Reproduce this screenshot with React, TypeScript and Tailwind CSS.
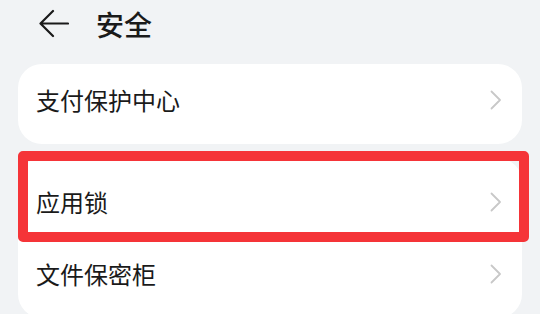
import React from 'react';

const Chevron: React.FC = () => (
  <svg width="12" height="20" viewBox="0 0 12 20" fill="none">
    <path d="M1.5 1.5 L10 10 L1.5 18.5" stroke="#c8c8c8" strokeWidth="1.8" strokeLinecap="round" strokeLinejoin="round" />
  </svg>
);

const Row: React.FC<{ label: string }> = ({ label }) => (
  <div className="h-[72px] flex items-center justify-between pl-[18px] pr-[20px]">
    <span className="text-[24px] leading-none text-[#1a1a1a]">{label}</span>
    <Chevron />
  </div>
);

const App: React.FC = () => {
  return (
    <div className="relative w-[540px] h-[314px] overflow-hidden bg-[#f1f3f5] font-['Noto_Sans_CJK_SC','Noto_Sans',sans-serif]">
      {/* Header */}
      <div className="h-[46px] flex items-center pl-[38px] pt-[1px]">
        <svg width="31" height="29" viewBox="0 0 31 29" fill="none">
          <path d="M30 14.5 H3 M15 2 L2.5 14.5 L15 27" stroke="#1a1a1a" strokeWidth="2.2" strokeLinecap="round" strokeLinejoin="round" />
        </svg>
        <span className="ml-[27px] text-[28px] leading-none font-medium text-[#1a1a1a]">安全</span>
      </div>

      <div className="mt-[18px] mx-[18px] w-[504px] flex flex-col gap-[14px]">
        <div className="bg-white rounded-[24px] pb-2">
          <Row label="支付保护中心" />
        </div>
        <div className="bg-white rounded-[24px] pt-2 pb-[8px]">
          <Row label="应用锁" />
          <Row label="文件保密柜" />
        </div>
      </div>

      {/* Highlight annotation */}
      <div className="absolute left-[18px] top-[151px] w-[511px] h-[91px] border-[10px] border-[#f53438] rounded-[5px]" />
    </div>
  );
};

export default App;
